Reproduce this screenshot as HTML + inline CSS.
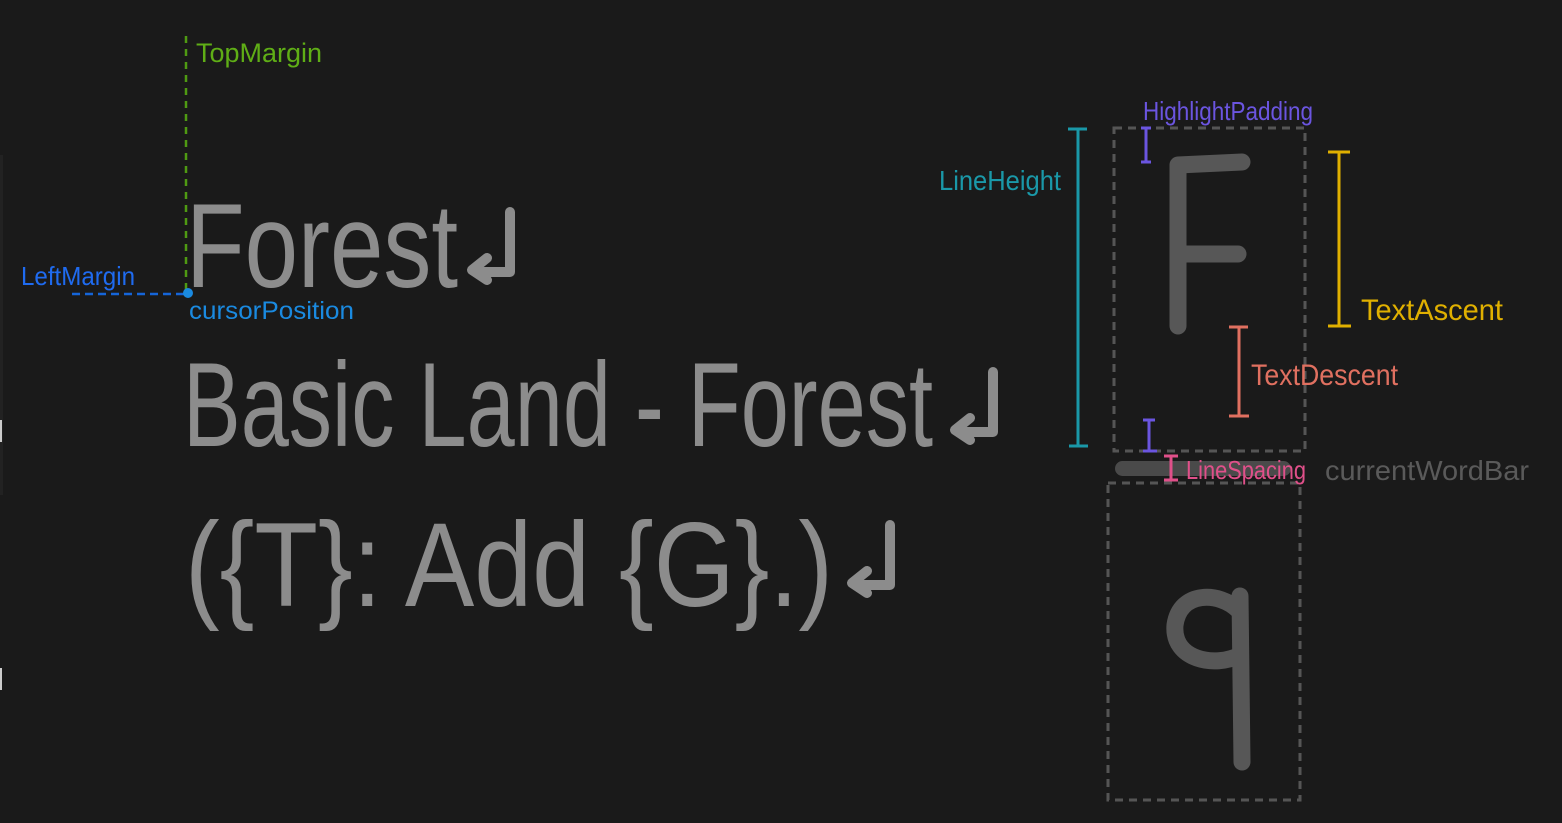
<!DOCTYPE html>
<html><head><style>
html,body{margin:0;padding:0;background:#1a1a1a;}
svg{display:block;}
text{font-family:"Liberation Sans",sans-serif;}
</style></head><body>
<svg width="1562" height="823" viewBox="0 0 1562 823" xmlns="http://www.w3.org/2000/svg">
<rect width="1562" height="823" fill="#1a1a1a"/>
<!-- top margin -->
<line x1="186" y1="36" x2="186" y2="290" stroke="#4f9a12" stroke-width="2.5" stroke-dasharray="7,6"/>
<text x="196" y="62" font-size="27" fill="#5fae16" textLength="126" lengthAdjust="spacingAndGlyphs">TopMargin</text>
<!-- left margin -->
<line x1="72" y1="294" x2="186" y2="294" stroke="#1565d8" stroke-width="2.5" stroke-dasharray="8,5"/>
<text x="21" y="285" font-size="26" fill="#1f6bf0" textLength="114" lengthAdjust="spacingAndGlyphs">LeftMargin</text>
<circle cx="188" cy="293" r="5" fill="#1a8ae0"/>
<text x="189" y="319" font-size="25" fill="#1a8ae0" textLength="165" lengthAdjust="spacingAndGlyphs">cursorPosition</text>
<!-- main text -->
<g fill="#8c8c8c" font-size="120">
<text x="186" y="287" textLength="272" lengthAdjust="spacingAndGlyphs">Forest</text>
<text x="183" y="446" textLength="750" lengthAdjust="spacingAndGlyphs">Basic Land - Forest</text>
<text x="185" y="606" textLength="648" lengthAdjust="spacingAndGlyphs">({T}: Add {G}.)</text>
</g>
<g fill="none" stroke="#8c8c8c" stroke-width="10" stroke-linecap="round" stroke-linejoin="round">
<path d="M510 212 V272 H475 M487 258 L472 270 L487 280"/>
<path d="M993 372 V432 H958 M970 418 L955 430 L970 440"/>
<path d="M890 525 V585 H855 M867 571 L852 583 L867 593"/>
</g>
<!-- big F -->
<g fill="none" stroke="#575757" stroke-width="17" stroke-linecap="round" stroke-linejoin="round">
<path d="M1178 326 L1178 165 L1242 162 M1181 254 L1238 254"/>
<path d="M1240 596 L1242 762 M1238 610 C1220 592 1180 590 1175 625 C1172 660 1215 668 1240 655"/>
</g>
<!-- dashed boxes -->
<rect x="1114" y="128" width="191" height="323" fill="none" stroke="#555" stroke-width="3" stroke-dasharray="8,6"/>
<rect x="1108" y="483" width="192" height="317" fill="none" stroke="#555" stroke-width="3" stroke-dasharray="8,6"/>
<!-- current word bar -->
<rect x="1115" y="461" width="176" height="15" rx="7.5" fill="#4a4a4a"/>
<text x="1325" y="480" font-size="28" fill="#5a5a5a" textLength="204" lengthAdjust="spacingAndGlyphs">currentWordBar</text>
<!-- line height -->
<g stroke="#1a98a8" stroke-width="3"><line x1="1078" y1="129" x2="1078" y2="446"/><line x1="1068" y1="129" x2="1087" y2="129"/><line x1="1069" y1="446" x2="1088" y2="446"/></g>
<text x="939" y="190" font-size="28" fill="#1a98a8" textLength="122" lengthAdjust="spacingAndGlyphs">LineHeight</text>
<!-- highlight padding -->
<text x="1143" y="120" font-size="26" fill="#6b55e0" textLength="170" lengthAdjust="spacingAndGlyphs">HighlightPadding</text>
<g stroke="#6b55e0" stroke-width="3"><line x1="1146" y1="128" x2="1146" y2="162"/><line x1="1141" y1="128" x2="1151" y2="128"/><line x1="1141" y1="162" x2="1151" y2="162"/>
<line x1="1149" y1="420" x2="1149" y2="451"/><line x1="1143" y1="420" x2="1155" y2="420"/><line x1="1143" y1="451" x2="1157" y2="451"/></g>
<!-- text ascent -->
<g stroke="#e0b000" stroke-width="3"><line x1="1339" y1="152" x2="1339" y2="326"/><line x1="1328" y1="152" x2="1350" y2="152"/><line x1="1328" y1="326" x2="1351" y2="326"/></g>
<text x="1361" y="320" font-size="30" fill="#e0b000" textLength="142" lengthAdjust="spacingAndGlyphs">TextAscent</text>
<!-- text descent -->
<g stroke="#e07060" stroke-width="3"><line x1="1239" y1="327" x2="1239" y2="416"/><line x1="1229" y1="327" x2="1248" y2="327"/><line x1="1229" y1="416" x2="1249" y2="416"/></g>
<text x="1251" y="385" font-size="30" fill="#e07060" textLength="147" lengthAdjust="spacingAndGlyphs">TextDescent</text>
<!-- line spacing -->
<g stroke="#e0508a" stroke-width="3"><line x1="1171" y1="456" x2="1171" y2="480"/><line x1="1164" y1="456" x2="1178" y2="456"/><line x1="1164" y1="480" x2="1178" y2="480"/></g>
<text x="1186" y="479" font-size="26" fill="#e0508a" textLength="120" lengthAdjust="spacingAndGlyphs">LineSpacing</text>
<!-- left edge marks -->
<rect x="0" y="155" width="3" height="340" fill="#222"/>
<rect x="0" y="420" width="2" height="22" fill="#ccc"/>
<rect x="0" y="668" width="2" height="22" fill="#ccc"/>
</svg>
</body></html>
